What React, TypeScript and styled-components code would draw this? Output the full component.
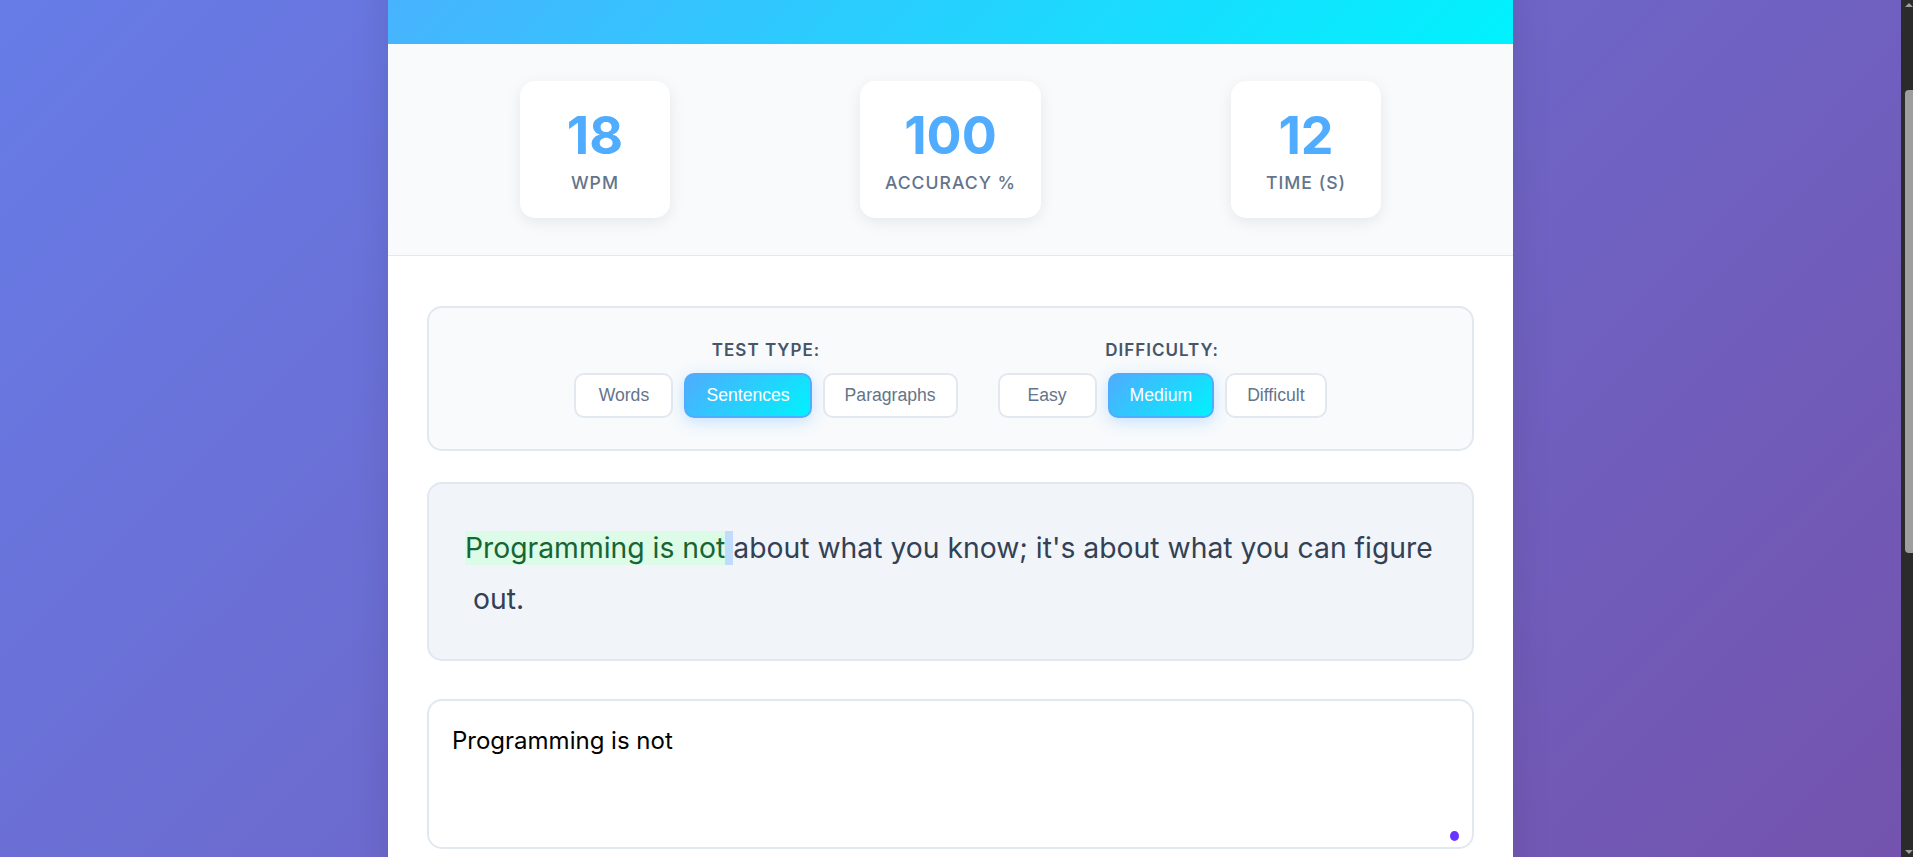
import React, { useLayoutEffect, useEffect } from "react";
import styled, { createGlobalStyle } from "styled-components";

const GlobalStyle = createGlobalStyle`
  * { box-sizing: border-box; }
  html { margin: 0; padding: 0; scroll-behavior: auto; }
  body {
    margin: 0;
    padding: 20px 32px 20px 20px;
    min-height: 100vh;
    font-family: Inter, "Noto Sans", sans-serif;
    background: linear-gradient(135deg, #667eea 0%, #764ba2 100%);
  }
`;

const Container = styled.div`
  max-width: 1125px;
  margin: 0 auto;
  background: #ffffff;
  border-radius: 20px;
  overflow: hidden;
  box-shadow: 0 20px 40px rgba(0, 0, 0, 0.1);
`;

const Header = styled.header`
  background: linear-gradient(135deg, #4facfe 0%, #00f2fe 100%);
  color: #ffffff;
  text-align: center;
  padding: 28px 20px 56px;
`;

const Title = styled.h1`
  margin: 0;
  font-size: 40px;
  line-height: 48px;
  font-weight: 700;
`;

const Subtitle = styled.p`
  margin: 10px 0 0;
  font-size: 17.6px;
  line-height: 21px;
  opacity: 0.9;
`;

const Stats = styled.section`
  display: flex;
  justify-content: space-around;
  padding: 37px;
  background: #f8fafc;
  border-bottom: 1px solid #e2e8f0;
`;

const StatCard = styled.div`
  min-width: 150px;
  padding: 24px 25px;
  background: #ffffff;
  border-radius: 15px;
  text-align: center;
  box-shadow: 0 4px 15px rgba(0, 0, 0, 0.08);
`;

const StatValue = styled.div`
  font-size: 52px;
  line-height: 1.2;
  font-weight: 700;
  color: #4facfe;
`;

const StatLabel = styled.div`
  margin-top: 5px;
  font-size: 17.6px;
  line-height: 1.21;
  font-weight: 500;
  color: #64748b;
  text-transform: uppercase;
  letter-spacing: 1px;
`;

const Content = styled.main`
  padding: 50px 39px 40px;
`;

const SettingsPanel = styled.div`
  display: flex;
  justify-content: center;
  gap: 40px;
  padding: 32px 30px 31px;
  margin-bottom: 31px;
  background: #f8fafc;
  border: 2px solid #e2e8f0;
  border-radius: 15px;
`;

const Group = styled.div`
  display: flex;
  flex-direction: column;
  align-items: center;
`;

const GroupLabel = styled.div`
  margin-bottom: 13px;
  font-size: 17px;
  line-height: 20px;
  font-weight: 600;
  color: #475569;
  text-transform: uppercase;
  letter-spacing: 1px;
`;

const ButtonRow = styled.div`
  display: flex;
  gap: 11px;
`;

const OptionButton = styled.button<{ $active?: boolean }>`
  min-width: 99px;
  padding: 10px 20px;
  font-family: "Liberation Sans", Arial, sans-serif;
  font-size: 17.6px;
  line-height: normal;
  border-radius: 10px;
  cursor: pointer;
  border: 2px solid ${(p) => (p.$active ? "#4facfe" : "#e2e8f0")};
  background: ${(p) =>
    p.$active ? "linear-gradient(135deg, #4facfe 0%, #00f2fe 100%)" : "#ffffff"};
  color: ${(p) => (p.$active ? "#ffffff" : "#64748b")};
  box-shadow: ${(p) => (p.$active ? "0 4px 15px rgba(79, 172, 254, 0.3)" : "none")};
`;

const TextDisplay = styled.div`
  padding: 39.5px 36px 35.5px;
  margin-bottom: 38px;
  background: #f1f5f9;
  border: 2px solid #e2e8f0;
  border-radius: 15px;
  font-size: 28.3px;
  line-height: 50.4px;
  color: #334155;
`;

const Word = styled.span`
  white-space: nowrap;
`;

const Space = styled.span<{ $cursor?: boolean }>`
  display: inline-block;
  white-space: pre;
  background: ${(p) => (p.$cursor ? "#bfdbfe" : "transparent")};
  line-height: 34px;
  vertical-align: baseline;
`;

const Correct = styled.span`
  background: #dcfce7;
  color: #166534;
`;

const InputWrap = styled.div`
  position: relative;
`;

const TypingInput = styled.textarea`
  display: block;
  width: 100%;
  height: 150px;
  padding: 22px 22px 20px 23px;
  font-family: Inter, "Noto Sans", sans-serif;
  font-size: 24px;
  line-height: 1.5;
  color: #000000;
  background: #ffffff;
  border: 2px solid #e2e8f0;
  border-radius: 15px;
  resize: none;
  outline: none;
`;

const Dot = styled.span`
  position: absolute;
  right: 15px;
  bottom: 8px;
  width: 9px;
  height: 10px;
  border-radius: 50%;
  background: #6633ff;
`;

const Controls = styled.div`
  display: flex;
  justify-content: center;
  gap: 15px;
  margin-top: 30px;
`;

const ActionButton = styled.button`
  height: 52px;
  padding: 0 30px;
  font-family: "Liberation Sans", Arial, sans-serif;
  font-size: 17.6px;
  color: #ffffff;
  border: none;
  border-radius: 10px;
  background: linear-gradient(135deg, #4facfe 0%, #00f2fe 100%);
`;

const Instructions = styled.section`
  min-height: 369px;
  margin-top: 30px;
  padding: 25px;
  background: #f8fafc;
  border-radius: 15px;
  color: #475569;
  font-size: 16px;
  line-height: 1.6;
`;

const InstructionsTitle = styled.h3`
  margin: 0 0 12px;
  font-size: 20px;
  color: #334155;
`;

/* Browser scrollbar as it appears in the screenshot (overlay on the page edge) */
const ScrollTrack = styled.div`
  position: fixed;
  top: 0;
  right: 0;
  bottom: 0;
  width: 12px;
  background: #2b2b2b;
  z-index: 10;
`;

const ScrollThumb = styled.div`
  position: absolute;
  top: 90px;
  left: 4px;
  width: 8px;
  height: 463px;
  border-radius: 4px 0 0 4px;
  background: #9e9e9e;
`;

const ScrollArrow = styled.div<{ $down?: boolean }>`
  position: absolute;
  left: 4px;
  ${(p) => (p.$down ? "bottom: 3px;" : "top: 3px;")}
  width: 0;
  height: 0;
  border-left: 4px solid transparent;
  border-right: 4px solid transparent;
  ${(p) =>
    p.$down ? "border-top: 4px solid #9e9e9e;" : "border-bottom: 4px solid #9e9e9e;"}
`;

const stats = [
  { value: "18", label: "WPM" },
  { value: "100", label: "Accuracy %" },
  { value: "12", label: "Time (s)" },
];

const testTypes = ["Words", "Sentences", "Paragraphs"];
const difficulties = ["Easy", "Medium", "Difficult"];

const renderWords = (text: string, prefix: string) => {
  const parts = text.split(" ");
  const out: React.ReactNode[] = [];
  parts.forEach((w, i) => {
    if (i > 0) out.push(<Space key={`${prefix}s${i}`}>{" "}</Space>);
    if (w) out.push(<Word key={`${prefix}w${i}`}>{w}</Word>);
  });
  return out;
};

export default function App() {
  useLayoutEffect(() => {
    window.scrollTo(0, 139);
  }, []);
  useEffect(() => {
    const id = requestAnimationFrame(() => window.scrollTo(0, 139));
    return () => cancelAnimationFrame(id);
  }, []);

  return (
    <>
      <GlobalStyle />
      <Container>
        <Header>
          <Title>Typing Speed Test</Title>
          <Subtitle>Test your typing speed and accuracy</Subtitle>
        </Header>
        <Stats>
          {stats.map((s) => (
            <StatCard key={s.label}>
              <StatValue>{s.value}</StatValue>
              <StatLabel>{s.label}</StatLabel>
            </StatCard>
          ))}
        </Stats>
        <Content>
          <SettingsPanel>
            <Group>
              <GroupLabel>Test Type:</GroupLabel>
              <ButtonRow>
                {testTypes.map((t) => (
                  <OptionButton key={t} $active={t === "Sentences"}>
                    {t}
                  </OptionButton>
                ))}
              </ButtonRow>
            </Group>
            <Group>
              <GroupLabel>Difficulty:</GroupLabel>
              <ButtonRow>
                {difficulties.map((d) => (
                  <OptionButton key={d} $active={d === "Medium"}>
                    {d}
                  </OptionButton>
                ))}
              </ButtonRow>
            </Group>
          </SettingsPanel>
          <TextDisplay>
            <Correct>{renderWords("Programming is not", "c")}</Correct>
            <Space $cursor>{" "}</Space>
            {renderWords("about what you know; it's about what you can figure out.", "r")}
          </TextDisplay>
          <InputWrap>
            <TypingInput defaultValue="Programming is not" spellCheck={false} />
            <Dot />
          </InputWrap>
          <Controls>
            <ActionButton>Start Test</ActionButton>
            <ActionButton>Reset</ActionButton>
          </Controls>
          <Instructions>
            <InstructionsTitle>How it works</InstructionsTitle>
            Type the text shown above as quickly and accurately as you can. Your
            words per minute, accuracy and elapsed time update as you type.
          </Instructions>
        </Content>
      </Container>
      <ScrollTrack>
        <ScrollArrow />
        <ScrollThumb />
        <ScrollArrow $down />
      </ScrollTrack>
    </>
  );
}
